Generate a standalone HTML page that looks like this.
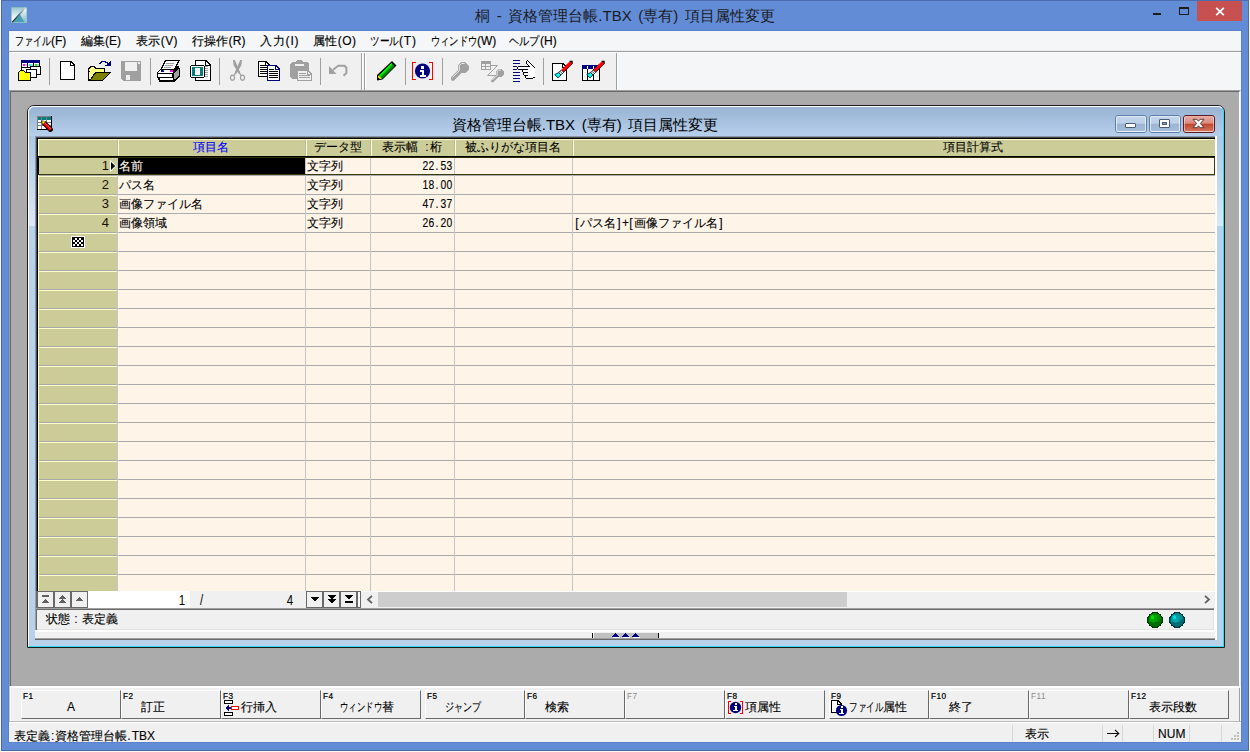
<!DOCTYPE html>
<html lang="ja">
<head>
<meta charset="utf-8">
<title>桐</title>
<style>
html,body{margin:0;padding:0;}
body{width:1250px;height:752px;overflow:hidden;background:#fbf8f2;position:relative;
  font-family:"Liberation Sans",sans-serif;font-size:12px;color:#000;line-height:1;}
div,svg{position:absolute;box-sizing:border-box;}
span.k{display:inline-block;transform-origin:0 50%;}
svg{overflow:visible;}
.t{white-space:nowrap;}
/* ---------- outer window ---------- */
#win{left:1px;top:0;width:1248px;height:751px;background:#628cd6;border:1px solid #4a69a6;border-top-color:#4d6eae;}
#title{left:0;top:0;width:1250px;height:31px;}
#title .cap{left:0;width:1250px;top:8px;text-align:center;font-size:15px;color:#1b1b1f;letter-spacing:0;word-spacing:2.5px;}
#client{left:9px;top:31px;width:1232px;height:711px;background:#f0f0f0;outline:1px solid #5a81cb;}
/* menu */
#menu{left:0;top:0;width:1232px;height:20px;background:#f5f6f7;}
#menu .t{top:4px;font-size:12px;color:#000;-webkit-text-stroke:.15px #000;}
#msep0{left:0;top:19px;width:1232px;height:1px;background:#e9eaeb;}
#msep1{left:0;top:20px;width:1232px;height:1px;background:#a0a0a0;}
#msep2{left:0;top:21px;width:1232px;height:1px;background:#ffffff;}
/* toolbar */
#tb{left:0;top:22px;width:1232px;height:37px;background:#f5f6f7;}
#tb1{left:0;top:0;width:607px;height:37px;background:#f0f0f0;}
#tbend{left:607px;top:0;width:1px;height:37px;background:#a0a0a0;}
#tbend2{left:608px;top:0;width:1px;height:37px;background:#fff;}
#ticons{left:0;top:52px;}
#ticons *{shape-rendering:crispEdges;}
.vsep{width:1px;background:#a0a0a0;top:5px;height:27px;}
.vsepw{width:1px;background:#ffffff;top:5px;height:27px;}
/* mdi */
#mdi{left:0;top:59px;width:1232px;height:598px;background:#ababab;
  border-left:1px solid #a0a0a0;border-top:1px solid #a0a0a0;border-right:1px solid #f0f0f0;border-bottom:1px solid #f0f0f0;}
#mdi2{left:0;top:0;width:1230px;height:596px;
  border-left:1px solid #696969;border-top:1px solid #696969;border-right:1px solid #ffffff;border-bottom:1px solid #ffffff;}
/* ---------- child window ---------- */
#cf{left:27px;top:105px;width:1198px;height:543px;border:1px solid #1c1c1c;border-radius:7px 7px 0 0;background:#b9d1ea;}
#cfi{left:0;top:0;width:1196px;height:541px;border:1px solid #fff;border-right-color:#2adcf4;border-bottom-color:#2adcf4;border-radius:6px 6px 0 0;
  background:linear-gradient(#98b3d3 0,#a9c3e1 16px,#b8d0ec 30px,#b9d1ea 31px);}
#cfl{left:29px;top:136px;width:6px;height:90px;background:linear-gradient(#aec7e4,#dce8f5);}
#cfr{left:1217px;top:136px;width:6px;height:90px;background:linear-gradient(#aec7e4,#dce8f5);}
#ctitle{left:27px;width:1116px;top:117px;text-align:center;font-size:15px;color:#000;letter-spacing:0;word-spacing:2.4px;}
.cb{top:115px;width:32px;height:18px;border:1px solid #5d7ea9;border-radius:3px;background:#a9c1de;}
.cb .cbi{left:0;top:0;width:30px;height:16px;border:1px solid rgba(255,255,255,.65);border-radius:2px;
  background:linear-gradient(#c2d5ec 0,#bcd0e8 45%,#9bb5d3 50%,#a4bddb 100%);}
.cb.cx{border-color:#5a1c24;background:#c8523a;}
.cb.cx .cbi{border-color:rgba(255,255,255,.45);background:linear-gradient(#e6a99e 0,#d9897b 45%,#c2442a 50%,#d2755e 100%);}
#th{left:38px;top:139px;width:1177px;height:17px;background:#cccc99;}
.hc{top:139px;height:17px;background:#cccc99;border-top:1px solid #ffffcc;border-left:1px solid #ffffcc;border-right:1px solid #b9b9a9;}
.ht{left:-3px;right:-1px;top:1px;text-align:center;white-space:nowrap;font-size:12px;line-height:12px;-webkit-text-stroke:.1px currentColor;}
span.h{display:inline-block;width:6px;text-align:center;}
#rowhdr{left:38px;top:175px;width:79px;height:416px;
  background:repeating-linear-gradient(#a9a9a9 0,#a9a9a9 1px,#ffffcc 1px,#ffffcc 2px,#cccc99 2px,#cccc99 19px);}
#data{left:118px;top:175px;width:1097px;height:416px;
  background:repeating-linear-gradient(#ababab 0,#ababab 1px,#fef5e8 1px,#fef5e8 19px);}
#r1h{left:38px;top:158px;width:79px;height:16px;background:#cccc99;}
#r1d{left:118px;top:158px;width:1096px;height:16px;background:#fef5e8;}
.cs{top:158px;width:1px;height:433px;background:#c6c6c6;}
#sel{left:118px;top:158px;width:187px;height:16px;background:#000;}
.rn{left:60px;width:49px;text-align:right;font-size:13px;line-height:12px;color:#1a1000;}
.c{white-space:nowrap;font-size:12px;line-height:12px;color:#000;-webkit-text-stroke:.12px currentColor;}
.c.n{left:391px;width:61px;text-align:right;}
.c.n span.h{transform:scale(.86,1.1);transform-origin:50% 80%;}
.nb{top:591px;width:17px;height:17px;border:1px solid #696969;background:#f0f0f0;}
.nb+.nb{margin-left:0}
.nt{font-size:14px;line-height:14px;white-space:nowrap;}
span.h7{display:inline-block;width:7px;text-align:center;transform:scale(.82,1.05);}
.m{font-size:12px;line-height:12px;color:#000;-webkit-text-stroke:.12px #000;}
.fk{top:690px;width:100px;height:29px;border-left:1px solid #fff;border-top:1px solid #fff;border-right:1px solid #696969;border-bottom:1px solid #696969;background:#f0f0f0;}
.fn{left:1px;top:1px;font-size:8.2px;line-height:9px;font-weight:normal;-webkit-text-stroke:.22px #000;color:#000;white-space:nowrap;letter-spacing:.5px;}
.fn.dis{color:#8c8c8c;-webkit-text-stroke:0;}
.fl{top:701px;}
</style>
</head>
<body>
<div id="win"></div>
<div id="title"><div class="cap t">桐 - 資格管理台帳.TBX (専有) 項目属性変更</div></div>
<div id="client">
  <div id="menu">
    <div class="t" style="left:6px"><span class="k" style="transform:scaleX(.75);margin-right:-12px">ファイル</span>(F)</div>
    <div class="t" style="left:72px">編集(E)</div>
    <div class="t" style="left:127px;letter-spacing:.4px">表示(V)</div>
    <div class="t" style="left:183px;letter-spacing:.17px">行操作(R)</div>
    <div class="t" style="left:251px;letter-spacing:.8px">入力(I)</div>
    <div class="t" style="left:304px;letter-spacing:.4px">属性(O)</div>
    <div class="t" style="left:361px"><span class="k" style="transform:scaleX(.8);margin-right:-7px">ツール</span><span style="letter-spacing:.8px">(T)</span></div>
    <div class="t" style="left:422px"><span class="k" style="transform:scaleX(.77);margin-right:-14px">ウィンドウ</span>(W)</div>
    <div class="t" style="left:500px"><span class="k" style="transform:scaleX(.85);margin-right:-5px">ヘルプ</span>(H)</div>
  </div>
  <div id="msep0"></div><div id="msep1"></div><div id="msep2"></div>
  <div id="tb"><div id="tb1"></div><div id="tbend"></div><div id="tbend2"></div></div>
  <div id="mdi"><div id="mdi2"></div></div>
</div>
<!--CHILD-->
<div id="cf"><div id="cfi"></div></div>
<div id="cfl"></div><div id="cfr"></div>
<div id="ctitle" class="t">資格管理台帳.TBX (専有) 項目属性変更</div>
<svg id="cicon" style="left:37px;top:116px" width="17" height="17" viewBox="0 0 17 17" shape-rendering="crispEdges">
<rect x="0" y="0" width="15" height="14" fill="#808080"/><rect x="14" y="0" width="1" height="14" fill="#000"/><rect x="0" y="13" width="10" height="1" fill="#000"/>
<rect x="1" y="1" width="3" height="3" fill="#008080"/><rect x="5" y="1" width="4" height="3" fill="#008080"/><rect x="10" y="1" width="4" height="3" fill="#008080"/>
<rect x="1" y="4" width="3" height="2" fill="#fff"/><rect x="5" y="4" width="4" height="2" fill="#fff"/><rect x="10" y="4" width="4" height="2" fill="#fff"/>
<rect x="1" y="7" width="3" height="2" fill="#fff"/><rect x="5" y="7" width="4" height="2" fill="#fff"/><rect x="10" y="7" width="4" height="2" fill="#fff"/>
<rect x="1" y="10" width="3" height="3" fill="#fff"/><rect x="5" y="10" width="4" height="3" fill="#fff"/>
<path d="M8.700 5.300L15.900 12.500L16 14.200L14.200 16L12.500 15.900L5.300 8.700L4.300 5.300L5 4.500z" fill="#000" shape-rendering="geometricPrecision"/>
<path d="M8 6L14.800 12.800L12.800 14.800L6 8z" fill="#ff0000" shape-rendering="geometricPrecision"/>
<path d="M8.600 7.300L14.200 12.900" stroke="#fff" stroke-width=".8" stroke-dasharray=".9 .9" shape-rendering="geometricPrecision"/>
<path d="M5.200 5.200L7.800 5.200L8 6L6 8L5.400 7.400z" fill="#ffff00" shape-rendering="geometricPrecision"/>
<path d="M6.300 7.700l1.400-1.400" stroke="#909000" stroke-width=".9" shape-rendering="geometricPrecision"/>
</svg>
<!-- caption buttons -->
<div class="cb" style="left:1115px"><div class="cbi"></div><div class="g" style="left:9px;top:7px;width:11px;height:5px;border:1px solid #4a5b73;background:#fff;border-radius:1px"></div></div>
<div class="cb" style="left:1149px"><div class="cbi"></div><div class="g" style="left:9px;top:3px;width:11px;height:9px;border:1px solid #4a5b73;background:#fff;border-radius:1px"></div><div class="g" style="left:12px;top:6px;width:5px;height:3px;border:1px solid #4a5b73;background:#7f9cc0"></div></div>
<div class="cb cx" style="left:1183px"><div class="cbi"></div>
<svg style="left:8px;top:2px" width="13" height="11" viewBox="0 0 13 11"><path d="M1 1.300h3.900l1.600 1.900l1.600-1.900h3.900l-3.600 4.200l3.600 4.200h-3.900l-1.600-1.900l-1.600 1.900h-3.900l3.600-4.200z" fill="#fff" stroke="#5e3c3c" stroke-width="1" stroke-linejoin="round"/></svg></div>
<!-- table sunken edge -->
<div style="left:35px;top:136px;width:1181px;height:456px;background:#fff"></div>
<div style="left:35px;top:136px;width:1180px;height:1px;background:#8a97a8"></div>
<div style="left:35px;top:136px;width:1px;height:455px;background:#8a97a8"></div>
<div style="left:36px;top:137px;width:1179px;height:2px;background:#000"></div>
<div style="left:36px;top:137px;width:2px;height:454px;background:#000"></div>
<div style="left:36px;top:137px;width:1179px;height:1px;background:#4a4a4a"></div>
<div style="left:36px;top:137px;width:1px;height:454px;background:#4a4a4a"></div>
<!-- header -->
<div id="th"></div>
<div class="hc" style="left:38px;width:80px"></div>
<div class="hc" style="left:118px;width:188px"><div class="ht" style="color:#0000ff">項目名</div></div>
<div class="hc" style="left:306px;width:65px"><div class="ht">データ型</div></div>
<div class="hc" style="left:371px;width:84px"><div class="ht">表示幅<span class="h"> </span><span class="h">:</span>桁</div></div>
<div class="hc" style="left:455px;width:118px"><div class="ht">被ふりがな項目名</div></div>
<div class="hc" style="left:573px;width:641px;border-right:none"><div class="ht" style="left:0;width:798px">項目計算式</div></div>
<div style="left:38px;top:156px;width:1177px;height:1px;background:#000"></div>
<div style="left:38px;top:157px;width:1177px;height:1px;background:#2c2c00"></div>
<!-- body -->
<div id="rowhdr"></div>
<div id="data"></div>
<div id="r1h"></div><div style="left:38px;top:158px;width:1px;height:433px;background:#ffffcc;z-index:1"></div><div id="r1d"></div>
<div style="left:38px;top:174px;width:1177px;height:1px;background:#3a3a10;z-index:2"></div>
<div style="left:1214px;top:158px;width:1px;height:17px;background:#3a3a10;z-index:2"></div>
<div class="cs" style="left:117px"></div><div class="cs" style="left:305px"></div><div class="cs" style="left:370px"></div><div class="cs" style="left:454px"></div><div class="cs" style="left:572px"></div>
<div id="sel"></div><div style="left:38px;top:158px;width:1px;height:16px;background:#000;z-index:2"></div>
<!-- row numbers -->
<div class="rn" style="top:160px">1</div><div class="rn" style="top:179px">2</div><div class="rn" style="top:198px">3</div><div class="rn" style="top:217px">4</div>
<svg style="left:110px;top:160px" width="7" height="12" viewBox="0 0 7 12"><path d="M0 0l6.500 6l-6.500 6z" fill="#fff"/><path d="M1 2l4.300 4l-4.300 4z" fill="#000"/></svg>
<svg style="left:71px;top:236px" width="14" height="12" viewBox="0 0 14 12" shape-rendering="crispEdges"><rect width="14" height="12" fill="#fff"/><rect x="1" y="1" width="12" height="10" fill="#000"/>
<g fill="#fff"><rect x="4" y="2" width="2" height="2"/><rect x="8" y="2" width="2" height="2"/><rect x="2" y="4" width="2" height="2"/><rect x="6" y="4" width="2" height="2"/><rect x="10" y="4" width="2" height="2"/><rect x="4" y="6" width="2" height="2"/><rect x="8" y="6" width="2" height="2"/><rect x="2" y="8" width="2" height="2"/><rect x="6" y="8" width="2" height="2"/><rect x="10" y="8" width="2" height="2"/></g></svg>
<!-- cell text -->
<div class="c" style="left:119px;top:160px;color:#fef5e8">名前</div>
<div class="c" style="left:119px;top:179px">パス名</div>
<div class="c" style="left:119px;top:198px">画像ファイル名</div>
<div class="c" style="left:119px;top:217px">画像領域</div>
<div class="c" style="left:307px;top:160px">文字列</div><div class="c" style="left:307px;top:179px">文字列</div><div class="c" style="left:307px;top:198px">文字列</div><div class="c" style="left:307px;top:217px">文字列</div>
<div class="c n" style="top:160px"><span class="h">2</span><span class="h">2</span><span class="h">.</span><span class="h">5</span><span class="h">3</span></div>
<div class="c n" style="top:179px"><span class="h">1</span><span class="h">8</span><span class="h">.</span><span class="h">0</span><span class="h">0</span></div>
<div class="c n" style="top:198px"><span class="h">4</span><span class="h">7</span><span class="h">.</span><span class="h">3</span><span class="h">7</span></div>
<div class="c n" style="top:217px"><span class="h">2</span><span class="h">6</span><span class="h">.</span><span class="h">2</span><span class="h">0</span></div>
<div class="c" style="left:574px;top:217px"><span class="h">[</span>パス名<span class="h">]</span><span class="h">+</span><span class="h">[</span>画像ファイル名<span class="h">]</span></div>
<!--/CHILD-->
<!--NAV-->
<div style="left:35px;top:591px;width:1181px;height:17px;background:#f0f0f0"></div>
<div style="left:35px;top:591px;width:1px;height:17px;background:#a0a0a0"></div>
<div style="left:36px;top:591px;width:1px;height:17px;background:#696969"></div>
<div class="nb" style="left:37px"></div><div class="nb" style="left:54px"></div><div class="nb" style="left:71px"></div>
<div style="left:88px;top:591px;width:102px;height:17px;background:#fff"></div>
<div class="nb" style="left:306px"></div><div class="nb" style="left:323px"></div><div class="nb" style="left:340px"></div>
<div style="left:357px;top:591px;width:4px;height:17px;background:#fff;border:1px solid #696969"></div>
<svg style="left:37px;top:591px" width="330" height="17" viewBox="37 591 330 17" shape-rendering="crispEdges">
<g fill="#606060">
<rect x="42" y="595" width="7" height="2"/><path d="M45 599h1v1h1v1h1v1h1v1h-7v-1h1v-1h1v-1h1z"/>
<path d="M62 595h1v1h1v1h1v1h1v1h-7v-1h1v-1h1v-1h1z"/><path d="M62 599h1v1h1v1h1v1h1v1h-7v-1h1v-1h1v-1h1z"/>
<path d="M79 597h1v1h1v1h1v1h1v1h-7v-1h1v-1h1v-1h1z"/>
</g>
<g fill="#000">
<path d="M311 597h8v1h-1v1h-1v1h-1v1h-2v-1h-1v-1h-1v-1h-1z"/>
<path d="M328 595h8v1h-1v1h-1v1h-1v1h-2v-1h-1v-1h-1v-1h-1z"/><path d="M328 599h8v1h-1v1h-1v1h-1v1h-2v-1h-1v-1h-1v-1h-1z"/>
<path d="M345 595h8v1h-1v1h-1v1h-1v1h-2v-1h-1v-1h-1v-1h-1z"/><rect x="345" y="601" width="8" height="2"/>
</g>
</svg>
<div class="nt" style="left:178px;top:593px"><span class="h7">1</span></div>
<div class="nt" style="left:198px;top:593px"><span class="h7">/</span></div>
<div class="nt" style="left:286px;top:593px"><span class="h7">4</span></div>
<!-- h scrollbar -->
<div style="left:361px;top:591px;width:854px;height:1px;background:#fff"></div>
<div style="left:378px;top:592px;width:469px;height:15px;background:#cdcdcd"></div>
<svg style="left:366px;top:595px" width="8" height="9" viewBox="0 0 8 9"><path d="M6 .8L2 4.500L6 8.200" fill="none" stroke="#606060" stroke-width="1.800"/></svg>
<svg style="left:1203px;top:595px" width="8" height="9" viewBox="0 0 8 9"><path d="M2 .8L6 4.500L2 8.200" fill="none" stroke="#606060" stroke-width="1.800"/></svg>
<!-- state panel -->
<div style="left:35px;top:608px;width:1181px;height:23px;background:#f0f0f0"></div>
<div style="left:35px;top:608px;width:1179px;height:1px;background:#a0a0a0"></div>
<div style="left:36px;top:609px;width:1178px;height:1px;background:#696969"></div>
<div style="left:35px;top:608px;width:1px;height:22px;background:#a0a0a0"></div>
<div style="left:36px;top:609px;width:1px;height:21px;background:#696969"></div>
<div style="left:37px;top:629px;width:1177px;height:1px;background:#e3e3e3"></div>
<div style="left:1213px;top:610px;width:1px;height:20px;background:#e3e3e3"></div>
<div style="left:36px;top:630px;width:1179px;height:1px;background:#fff"></div>
<div style="left:1214px;top:608px;width:1px;height:23px;background:#fff"></div>
<div class="t m" style="left:46px;top:613px">状態<span class="h" style="width:12px">:</span>表定義</div>
<svg style="left:1147px;top:612px" width="40" height="16" viewBox="0 0 40 16" shape-rendering="crispEdges">
<circle cx="8" cy="8" r="8" fill="#003800"/><circle cx="8" cy="8" r="6.900" fill="#006c00"/><path d="M2 8a6 6 0 0 1 12-1.500a9 9 0 0 1-12 3z" fill="#008c00"/><circle cx="6.500" cy="6.500" r="3.600" fill="#00a400"/><circle cx="5.500" cy="5.300" r="2" fill="#00e000"/>
<circle cx="30" cy="8" r="8" fill="#003438"/><circle cx="30" cy="8" r="6.900" fill="#006c70"/><path d="M24 8a6 6 0 0 1 12-1.500a9 9 0 0 1-12 3z" fill="#008c90"/><circle cx="28.500" cy="6.500" r="3.600" fill="#00a4a8"/><circle cx="27.500" cy="5.300" r="2" fill="#00dcdc"/>
</svg>
<!-- raised bar -->
<div style="left:35px;top:631px;width:1181px;height:9px;background:#f0f0f0"></div>
<div style="left:35px;top:631px;width:1181px;height:1px;background:#fff"></div>
<div style="left:35px;top:638px;width:1181px;height:1px;background:#a0a0a0"></div>
<div style="left:35px;top:639px;width:1181px;height:1px;background:#696969"></div>
<div style="left:1215px;top:136px;width:2px;height:504px;background:#fff"></div>
<div style="left:592px;top:633px;width:67px;height:5px;background:#c0c0c0;border-left:1px solid #000;border-right:1px solid #000"></div>
<div style="left:593px;top:633px;width:1px;height:5px;background:#f0f0f0"></div>
<svg style="left:610px;top:632px" width="32" height="7" viewBox="610 632 32 7" shape-rendering="crispEdges">
<g fill="#fff"><path d="M616 634h1v1h1v1h1v1h1v1h-7v-1h3z"/><path d="M626 634h1v1h1v1h1v1h1v1h-7v-1h3z"/><path d="M636 634h1v1h1v1h1v1h1v1h-7v-1h3z"/></g>
<g fill="#000080"><path d="M615 633h1v1h1v1h1v1h1v1h-7v-1h1v-1h1v-1h1z"/><path d="M625 633h1v1h1v1h1v1h1v1h-7v-1h1v-1h1v-1h1z"/><path d="M635 633h1v1h1v1h1v1h1v1h-7v-1h1v-1h1v-1h1z"/></g>
</svg>
<!--/NAV-->
<!--FKEY-->
<div style="left:9px;top:686px;width:1232px;height:35px;background:#f0f0f0"></div>
<div style="left:9px;top:686px;width:1232px;height:2px;background:#fff"></div>
<div style="left:9px;top:686px;width:1px;height:35px;background:#c8c8c8"></div>
<div style="left:10px;top:686px;width:1px;height:35px;background:#fff"></div>
<div style="left:1239px;top:688px;width:1px;height:33px;background:#a0a0a0"></div>
<div style="left:1240px;top:688px;width:1px;height:33px;background:#fff"></div>
<div class="fk" style="left:21px"><div class="fn">F1</div></div>
<div class="t m fl" style="left:67px">A</div>
<div class="fk" style="left:121px"><div class="fn">F2</div></div>
<div class="t m fl" style="left:141px">訂正</div>
<div class="fk" style="left:221px"><div class="fn">F3</div></div>
<div class="t m fl" style="left:241px">行挿入</div>
<div class="fk" style="left:321px"><div class="fn">F4</div></div>
<div class="t m fl" style="left:340px"><span class="k" style="transform:scaleX(.70);margin-right:-18px">ウィンドウ</span>替</div>
<div class="fk" style="left:425px"><div class="fn">F5</div></div>
<div class="t m fl" style="left:445px"><span class="k" style="transform:scaleX(.75);margin-right:-12px">ジャンプ</span></div>
<div class="fk" style="left:525px"><div class="fn">F6</div></div>
<div class="t m fl" style="left:545px">検索</div>
<div class="fk" style="left:625px"><div class="fn dis">F7</div></div>
<div class="fk" style="left:725px"><div class="fn">F8</div></div>
<div class="t m fl" style="left:745px">項属性</div>
<div class="fk" style="left:829px"><div class="fn">F9</div></div>
<div class="t m fl" style="left:849px"><span class="k" style="transform:scaleX(.71);margin-right:-14px">ファイル</span>属性</div>
<div class="fk" style="left:929px"><div class="fn">F10</div></div>
<div class="t m fl" style="left:949px">終了</div>
<div class="fk" style="left:1029px"><div class="fn dis">F11</div></div>
<div class="fk" style="left:1129px"><div class="fn">F12</div></div>
<div class="t m fl" style="left:1149px">表示段数</div>
<div style="left:9px;top:721px;width:1232px;height:21px;background:#f0f0f0"></div>
<div style="left:9px;top:721px;width:1232px;height:1px;background:#b9b9b9"></div>
<div style="left:9px;top:722px;width:1232px;height:1px;background:#fff"></div>
<div style="left:1012px;top:725px;width:1px;height:17px;background:#d7d7d7"></div>
<div style="left:1102px;top:725px;width:1px;height:17px;background:#d7d7d7"></div>
<div style="left:1122px;top:725px;width:1px;height:17px;background:#d7d7d7"></div>
<div style="left:1153px;top:725px;width:1px;height:17px;background:#d7d7d7"></div>
<div style="left:1189px;top:725px;width:1px;height:17px;background:#d7d7d7"></div>
<div style="left:1221px;top:725px;width:1px;height:17px;background:#d7d7d7"></div>
<div class="t m" style="left:14px;top:730px">表定義<span style="padding:0 1px">:</span>資格管理台帳<span style="padding-right:1px">.</span>TBX</div>
<div class="t m" style="left:1025px;top:728px">表示</div>
<svg style="left:1107px;top:729px" width="13" height="9" viewBox="0 0 13 9"><path d="M0 4.500h11.500M8 1l3.800 3.500l-3.800 3.500" fill="none" stroke="#101010" stroke-width="1.100"/></svg>
<div class="t m" style="left:1158px;top:728px;letter-spacing:.1px">NUM</div>
<svg style="left:1230px;top:731px" width="11" height="11" viewBox="0 0 11 11" shape-rendering="crispEdges"><g fill="#bfbfbf"><rect x="7" y="1" width="2" height="2"/><rect x="4" y="4" width="2" height="2"/><rect x="7" y="4" width="2" height="2"/><rect x="1" y="7" width="2" height="2"/><rect x="4" y="7" width="2" height="2"/><rect x="7" y="7" width="2" height="2"/></g></svg>
<!--/FKEY-->
<!--MISC-->
<svg style="left:222px;top:699px" width="20" height="18" viewBox="222 699 20 18" shape-rendering="crispEdges">
<rect x="224" y="700" width="9" height="4" fill="#000"/><rect x="225" y="701" width="7" height="2" fill="#fff"/>
<rect x="224" y="712" width="9" height="4" fill="#000"/><rect x="225" y="713" width="7" height="2" fill="#fff"/>
<rect x="231" y="706" width="8" height="4" fill="#ff0000"/><rect x="232" y="707" width="6" height="2" fill="#fff"/>
<path d="M226 707h1v-1h1v-1h1v2h2v2h-2v2h-1v-1h-1v-1h-1z" fill="#000080"/>
</svg>
<svg style="left:727px;top:700px" width="18" height="15" viewBox="727 700 18 15">
<path d="M728 701h3v1h-2v11h2v1h-3z" fill="#ff0000" shape-rendering="crispEdges"/><path d="M743 701h-3v1h2v11h-2v1h3z" fill="#ff0000" shape-rendering="crispEdges"/>
<circle cx="735.500" cy="707.500" r="5.700" fill="#000080"/>
<g fill="#fff" shape-rendering="crispEdges"><rect x="735" y="703" width="2" height="2"/><path d="M734 706h3v4h1v1h-5v-1h2v-3h-1z"/></g>
</svg>
<svg style="left:830px;top:699px" width="19" height="18" viewBox="830 699 19 18">
<path d="M831 700h7l4 4v9h-11z" fill="#000" shape-rendering="crispEdges"/><path d="M832 701h5v4h4v7h-9z" fill="#fff" shape-rendering="crispEdges"/><path d="M838 702l2 2h-2z" fill="#fff" shape-rendering="crispEdges"/>
<circle cx="841.500" cy="710.500" r="5.600" fill="#000080"/>
<g fill="#fff" shape-rendering="crispEdges"><rect x="841" y="706" width="2" height="2"/><path d="M840 709h3v4h1v1h-5v-1h2v-3h-1z"/></g>
</svg>
<!-- app icon -->
<svg style="left:11px;top:7px" width="16" height="16" viewBox="0 0 16 16">
<defs>
<linearGradient id="ia" x1="0" y1="0" x2="0" y2="1"><stop offset="0" stop-color="#9cc8d2"/><stop offset=".6" stop-color="#e6f2f4"/><stop offset="1" stop-color="#ffffff"/></linearGradient>
<linearGradient id="ib" x1="0" y1="0" x2="0" y2="1"><stop offset="0" stop-color="#ffffff"/><stop offset="1" stop-color="#7fbcc8"/></linearGradient>
<linearGradient id="ic" x1="0" y1="1" x2="0" y2="0"><stop offset="0" stop-color="#2a2a2a"/><stop offset=".5" stop-color="#4a6a70"/><stop offset="1" stop-color="#d8d8d8"/></linearGradient>
</defs>
<rect x="0" y="0" width="16" height="16" fill="#7fb0b8"/>
<rect x=".7" y=".7" width="14.600" height="14.600" fill="url(#ia)"/>
<path d="M8 6.500L15.300 .7V15.300H2z" fill="url(#ib)"/>
<path d="M2 15.300L8.300 6.500L13.500 15.300z" fill="#45a0b6"/>
<path d="M1.200 15.300L14.300 .7" stroke="url(#ic)" stroke-width="1.300"/>
</svg>
<!-- window controls -->
<div style="left:1153px;top:13px;width:8px;height:2px;background:#1d1d1d"></div>
<div style="left:1179px;top:7px;width:10px;height:8px;border:1px solid #1d1d1d;border-top-width:2px"></div>
<div style="left:1197px;top:1px;width:45px;height:20px;background:#c75050"></div>
<svg style="left:1215px;top:7px" width="10" height="9" viewBox="0 0 10 9"><path d="M1.200 .8L8.800 8.200M8.800 .8L1.200 8.200" stroke="#fff" stroke-width="1.700" fill="none"/></svg>
<!--/MISC-->
<!--TICONS-->
<svg id="ticons" width="1250" height="40" viewBox="0 52 1250 40">
<!-- separators -->
<g fill="#a0a0a0">
<rect x="49" y="58" width="1" height="27"/><rect x="150" y="58" width="1" height="27"/><rect x="219" y="58" width="1" height="27"/>
<rect x="320" y="58" width="1" height="27"/><rect x="405" y="58" width="1" height="27"/><rect x="442" y="58" width="1" height="27"/>
<rect x="543" y="58" width="1" height="27"/>
<rect x="361" y="53" width="1" height="37"/><rect x="364" y="53" width="1" height="37"/>
</g>
<g fill="#ffffff"><rect x="362" y="53" width="1" height="37"/><rect x="365" y="53" width="1" height="37"/></g>
<!-- 1 workspace -->
<g>
<rect x="21" y="60" width="19" height="3" fill="#000080"/>
<rect x="21" y="63" width="19" height="5" fill="#000"/>
<rect x="22" y="63" width="5" height="4" fill="#fff"/><rect x="28" y="63" width="5" height="4" fill="#fff"/><rect x="34" y="63" width="5" height="4" fill="#fff"/>
<rect x="25" y="64" width="2" height="2" fill="#c8c8c8"/><rect x="31" y="64" width="2" height="2" fill="#c8c8c8"/><rect x="37" y="64" width="2" height="2" fill="#c8c8c8"/>
<rect x="23" y="64" width="2" height="2" fill="#ff00ff"/><rect x="29" y="64" width="2" height="2" fill="#00ffff"/><rect x="35" y="64" width="2" height="2" fill="#00ff00"/>
<rect x="21" y="68" width="1" height="4" fill="#000"/><rect x="22" y="68" width="8" height="4" fill="#fff"/>
<rect x="30" y="66" width="11" height="9" fill="#000"/><rect x="31" y="67" width="9" height="7" fill="#fff"/>
<rect x="26" y="69" width="11" height="9" fill="#000"/><rect x="27" y="70" width="9" height="7" fill="#fff"/>
<path d="M18 72h1v-1h1v-1h4v1h1v1h6v9h-13z" fill="#000"/>
<path d="M19 73v-1h1v-1h4v1h1v1h5v7h-11z" fill="#ffff00"/>
</g>
<!-- 2 new -->
<g>
<path d="M60 61h11l4 4v15h-15z" fill="#000"/>
<path d="M61 62h9v4h4v13h-13z" fill="#fff"/>
<path d="M71 63l2 2h-2z" fill="#fff"/>
</g>
<!-- 3 open -->
<g>
<path d="M88 68h1v-1h1v-1h5v1h1v1h9v4h-2v9h-15z" fill="#000"/>
<path d="M89 69h1v-1h1v-1h3v1h1v1h9v3h-14z" fill="#ffff80"/>
<path d="M89 72h12v7h-12z" fill="#ffff80"/>
<path d="M89 81l6-9h16l-8 9z" fill="#000"/>
<path d="M91 80l5-7h13l-6 7z" fill="#808000"/>
<path d="M99 63h1v-1h1v-1h5v1h2v1h1v2h-1v-1h-1v-1h-2v-1h-3v1h-1v1h-2z" fill="#000080"/>
<path d="M105 65h6v-5h-1v1h-1v1h-1v1h-1v1h-2z" fill="#000080" transform="translate(0,1)"/>
</g>
<!-- 4 save (disabled) -->
<g>
<path d="M121 61h20v20h-18l-2-2z" fill="#a0a0a0"/>
<rect x="125" y="62" width="12" height="9" fill="#f0f0f0"/>
<rect x="138" y="62" width="2" height="2" fill="#f0f0f0"/>
<rect x="126" y="75" width="4" height="5" fill="#f0f0f0"/>
</g>
<!-- 5 print -->
<g>
<path d="M165 60h15l-5 10h-15z" fill="#000"/>
<path d="M166 61h12l-4 8h-12z" fill="#fff"/>
<rect x="166" y="63" width="8" height="1" fill="#a0a0a0"/><rect x="165" y="65" width="8" height="1" fill="#a0a0a0"/><rect x="164" y="67" width="7" height="1" fill="#a0a0a0"/>
<path d="M160 69h13l3-3h3v2h1v8l-3 3v1l-3 2h-15v-2h-1v-2h-1v-6z" fill="#000"/>
<path d="M161 70h12v3h-15v-1z" fill="#fff"/>
<rect x="158" y="74" width="14" height="3" fill="#fff"/>
<rect x="160" y="78" width="13" height="2" fill="#fff"/>
<path d="M174 73l4-4h1v6l-4 4h-1z" fill="#a0a0a0"/>
<rect x="161" y="70" width="3" height="2" fill="#000080"/><rect x="163" y="70" width="1" height="1" fill="#008080"/>
<rect x="170" y="70" width="3" height="2" fill="#ff00ff"/>
</g>
<!-- 6 preview -->
<g>
<path d="M195 60h11l5 5v16h-16z" fill="#000"/>
<path d="M196 61h9v5h5v14h-14z" fill="#fff"/>
<path d="M206 62l3 3h-3z" fill="#fff"/>
<g fill="#a0a0a0"><rect x="205" y="66" width="3" height="1"/><rect x="205" y="68" width="3" height="1"/><rect x="205" y="70" width="3" height="1"/><rect x="205" y="72" width="3" height="1"/><rect x="205" y="74" width="3" height="1"/><rect x="205" y="76" width="3" height="1"/></g>
<path d="M191 65h13v1h1v11h-1v1h-13v-1h-1v-11h1z" fill="#000"/>
<rect x="191" y="66" width="13" height="11" fill="#fff"/>
<rect x="192" y="67" width="11" height="9" fill="#008080"/>
<rect x="195" y="68" width="5" height="7" fill="#fff"/>
</g>
<!-- 7 cut (disabled) -->
<g style="shape-rendering:geometricPrecision">
<path d="M233 60l1.800 0l5.400 12.500l-1.600 1.200l-4.900-8.500z" fill="#a0a0a0" style="shape-rendering:geometricPrecision"/>
<path d="M242 60l-1.800 0l-5.400 12.500l1.600 1.200l4.900-8.500z" fill="#a0a0a0" style="shape-rendering:geometricPrecision"/>
<path d="M236 72l-2 3.500M239 72l2 3.500" stroke="#a0a0a0" stroke-width="1.300" style="shape-rendering:geometricPrecision"/>
<ellipse cx="232.500" cy="77.700" rx="2" ry="2.500" fill="none" stroke="#a0a0a0" stroke-width="1.200" style="shape-rendering:geometricPrecision"/>
<ellipse cx="242.500" cy="77.700" rx="2" ry="2.500" fill="none" stroke="#a0a0a0" stroke-width="1.200" style="shape-rendering:geometricPrecision"/>
</g>
<!-- 8 copy -->
<g>
<path d="M258 61h8l4 4v12h-12z" fill="#000"/><path d="M259 62h6v4h4v10h-10z" fill="#fff"/><path d="M266 63l2 2h-2z" fill="#fff"/>
<g fill="#000"><rect x="260" y="65" width="5" height="1"/><rect x="260" y="67" width="8" height="1"/><rect x="260" y="69" width="8" height="1"/><rect x="260" y="71" width="8" height="1"/><rect x="260" y="73" width="8" height="1"/></g>
<path d="M267 65h9l4 4v12h-13z" fill="#000080"/><path d="M268 66h7v4h4v10h-11z" fill="#fff"/><path d="M276 67l2 2h-2z" fill="#fff"/>
<g fill="#000"><rect x="269" y="69" width="5" height="1"/><rect x="269" y="71" width="9" height="1"/><rect x="269" y="73" width="9" height="1"/><rect x="269" y="75" width="9" height="1"/><rect x="269" y="77" width="9" height="1"/></g>
</g>
<!-- 9 paste (disabled) -->
<g>
<path d="M292 62h4v-1h1v-1h5v1h1v1h4l2 2v13l-2 2h-15l-2-2v-13z" fill="#a0a0a0"/>
<rect x="295" y="64" width="9" height="2" fill="#f0f0f0"/>
<path d="M297 70h11l4 4v7h-15z" fill="#a0a0a0"/>
<path d="M298 71h9v4h4v5h-13z" fill="#f0f0f0"/><path d="M308 72l2 2h-2z" fill="#f0f0f0"/>
<g fill="#a0a0a0"><rect x="299" y="73" width="7" height="1"/><rect x="299" y="75" width="11" height="1"/><rect x="299" y="77" width="11" height="1"/></g>
</g>
<!-- 10 undo (disabled) -->
<g style="shape-rendering:geometricPrecision">
<path d="M329 66V74H336.500z" fill="#a0a0a0" style="shape-rendering:geometricPrecision"/>
<path d="M332.800 70L338.200 65.800H344.500L346.400 67.800V73L343.600 75.700" fill="none" stroke="#a0a0a0" stroke-width="2" stroke-linejoin="round" style="shape-rendering:geometricPrecision"/>
</g>
<!-- 11 pencil -->
<g style="shape-rendering:geometricPrecision">
<path d="M392 61l4.500 4.500l-14 14l-5.500 1v-5.500z" fill="#000" style="shape-rendering:geometricPrecision"/>
<path d="M391.500 63.500l2.500 2.500l-12.500 12.500l-2.500-2.500z" fill="#00c000" style="shape-rendering:geometricPrecision"/>
<path d="M391.500 63l1 1l-12.500 12.500l-1-1z" fill="#00ff00" style="shape-rendering:geometricPrecision"/>
<path d="M393 65l1.500 1.500l-12.500 12.500l-1.500-1.500z" fill="#008000" style="shape-rendering:geometricPrecision"/>
<path d="M378.300 75.300l3.500 3.500l-2 .2l-1.800-1.700z" fill="#ffff00" style="shape-rendering:geometricPrecision"/>
</g>
<!-- 12 info -->
<g>
<path d="M412 62h4v1h-3v16h3v1h-4z" fill="#ff0000"/><path d="M433 62h-4v1h3v16h-3v1h4z" fill="#ff0000"/>
<circle cx="422.500" cy="71" r="7.600" fill="#000080" style="shape-rendering:geometricPrecision"/>
<rect x="421" y="66" width="3" height="3" fill="#fff"/>
<path d="M420 70h4v5h2v2h-6v-2h2v-3h-2z" fill="#fff"/>
</g>
<!-- 13 key (disabled) -->
<g style="shape-rendering:geometricPrecision">
<path d="M461 62h4l4 4v3.500l-3.500 3.500h-4l-7 7l-1.500 1l-1.500-.5l-.5-2l.2-1.500l6.800-6.700v-4.800z" fill="#a0a0a0" style="shape-rendering:geometricPrecision"/>
<path d="M452.500 77.300l6.800-6.700v-5l2.200-2.200h3.200" fill="none" stroke="#f0f0f0" stroke-width="1" style="shape-rendering:geometricPrecision"/>
</g>
<!-- 14 table+key (disabled) -->
<g>
<rect x="481" y="61" width="10" height="9" fill="#a0a0a0"/>
<rect x="482" y="64" width="3" height="2" fill="#f0f0f0"/><rect x="486" y="64" width="4" height="2" fill="#f0f0f0"/>
<rect x="482" y="67" width="3" height="2" fill="#f0f0f0"/><rect x="486" y="67" width="4" height="2" fill="#f0f0f0"/>
<path d="M491 65.500h6.500l-10 10h8.700" stroke="#a0a0a0" stroke-width="1" fill="none" style="shape-rendering:geometricPrecision"/>
<path d="M498.500 69h3l2.500 2.500v3l-2.500 2.500h-3l-5 5l-1.200 .5l-1-.8l-.3-1.400l5-5.300v-3.500z" fill="#a0a0a0" style="shape-rendering:geometricPrecision"/>
<path d="M492.200 80.200l4.900-5v-3.500l1.700-1.700h2.200" fill="none" stroke="#f0f0f0" stroke-width=".9" style="shape-rendering:geometricPrecision"/>
</g>
<!-- 15 lines+hand -->
<g>
<g fill="#000080"><rect x="513" y="60" width="7" height="1"/><rect x="513" y="63" width="7" height="1"/><rect x="513" y="66" width="4" height="1"/><rect x="513" y="69" width="4" height="1"/><rect x="513" y="72" width="7" height="1"/><rect x="513" y="75" width="7" height="1"/><rect x="513" y="78" width="7" height="1"/><rect x="513" y="81" width="7" height="1"/></g>
<path d="M518 66H527V61h1l7 7V79h-9L522 70h-4z" fill="#fff"/>
<g fill="#000">
<rect x="518" y="66" width="12" height="1"/><rect x="517" y="67" width="1" height="2"/><rect x="518" y="69" width="10" height="1"/>
<rect x="526" y="61" width="1" height="3"/><rect x="527" y="60" width="1" height="1"/><rect x="527" y="64" width="1" height="1"/><rect x="528" y="65" width="1" height="1"/>
<rect x="528" y="61" width="1" height="1"/><rect x="529" y="62" width="1" height="1"/><rect x="530" y="63" width="1" height="1"/><rect x="531" y="64" width="1" height="1"/><rect x="532" y="65" width="1" height="1"/><rect x="533" y="66" width="1" height="1"/><rect x="534" y="67" width="1" height="1"/>
<rect x="522" y="70" width="1" height="2"/><rect x="523" y="72" width="5" height="1"/><rect x="523" y="73" width="1" height="2"/><rect x="524" y="75" width="4" height="1"/><rect x="525" y="76" width="1" height="2"/><rect x="526" y="78" width="7" height="1"/><rect x="533" y="77" width="2" height="1"/>
</g>
</g>
<!-- 16 doc+brush -->
<g>
<path d="M552 63h11l4 4v14h-15z" fill="#000"/><path d="M553 64h9v4h4v12h-13z" fill="#fff"/><path d="M563 65l2 2h-2z" fill="#fff"/>
<g style="shape-rendering:geometricPrecision">
<path d="M570 61.300l2.200 2.200l-8.700 8.700l-2.200-2.200z" fill="#ff0000" style="shape-rendering:geometricPrecision"/>
<path d="M572.300 63.600l-8.700 8.700" stroke="#400000" stroke-width=".9" fill="none" style="shape-rendering:geometricPrecision"/>
<path d="M569.800 61.200l-8.600 8.600" stroke="#c00000" stroke-width=".5" fill="none" stroke-dasharray="1 1" style="shape-rendering:geometricPrecision"/>
<path d="M569.300 60.800h3.400v3.400z" fill="#000" style="shape-rendering:geometricPrecision"/>
<path d="M561.300 70l2.300 2.300l-2.600 2.600l-2.300-2.300z" fill="#fff" stroke="#000" stroke-width=".8" style="shape-rendering:geometricPrecision"/>
<path d="M560 71.300l2.300 2.300" stroke="#000" stroke-width=".7" style="shape-rendering:geometricPrecision"/>
<path d="M558.700 72.600l2.300 2.300l-3 3l-3.300-3.300z" fill="#00ffff" stroke="#000" stroke-width=".8" stroke-linejoin="round" style="shape-rendering:geometricPrecision"/>
</g>
</g>
<!-- 17 table+brush -->
<g>
<rect x="582" y="65" width="18" height="16" fill="#000"/>
<rect x="582" y="65" width="18" height="4" fill="#000080"/>
<rect x="583" y="69" width="4" height="11" fill="#fff"/><rect x="588" y="69" width="5" height="11" fill="#fff"/><rect x="594" y="69" width="5" height="11" fill="#fff"/>
<g fill="#e0e0e0"><rect x="584" y="72" width="2" height="1"/><rect x="589" y="72" width="3" height="1"/><rect x="595" y="72" width="3" height="1"/><rect x="584" y="76" width="2" height="1"/><rect x="589" y="76" width="3" height="1"/><rect x="595" y="76" width="3" height="1"/></g>
<rect x="587" y="66" width="1" height="3" fill="#fff"/><rect x="593" y="66" width="1" height="3" fill="#fff"/>
<g transform="translate(32,0)" style="shape-rendering:geometricPrecision">
<path d="M570 61.300l2.200 2.200l-8.700 8.700l-2.200-2.200z" fill="#ff0000" style="shape-rendering:geometricPrecision"/>
<path d="M572.300 63.600l-8.700 8.700" stroke="#400000" stroke-width=".9" fill="none" style="shape-rendering:geometricPrecision"/>
<path d="M569.800 61.200l-8.600 8.600" stroke="#c00000" stroke-width=".5" fill="none" stroke-dasharray="1 1" style="shape-rendering:geometricPrecision"/>
<path d="M569.300 60.800h3.400v3.400z" fill="#000" style="shape-rendering:geometricPrecision"/>
<path d="M561.300 70l2.300 2.300l-2.600 2.600l-2.300-2.300z" fill="#fff" stroke="#000" stroke-width=".8" style="shape-rendering:geometricPrecision"/>
<path d="M560 71.300l2.300 2.300" stroke="#000" stroke-width=".7" style="shape-rendering:geometricPrecision"/>
<path d="M558.700 72.600l2.300 2.300l-3 3l-3.300-3.300z" fill="#00ffff" stroke="#000" stroke-width=".8" stroke-linejoin="round" style="shape-rendering:geometricPrecision"/>
</g>
</g>
</svg>
<!--/TICONS-->
</body>
</html>
